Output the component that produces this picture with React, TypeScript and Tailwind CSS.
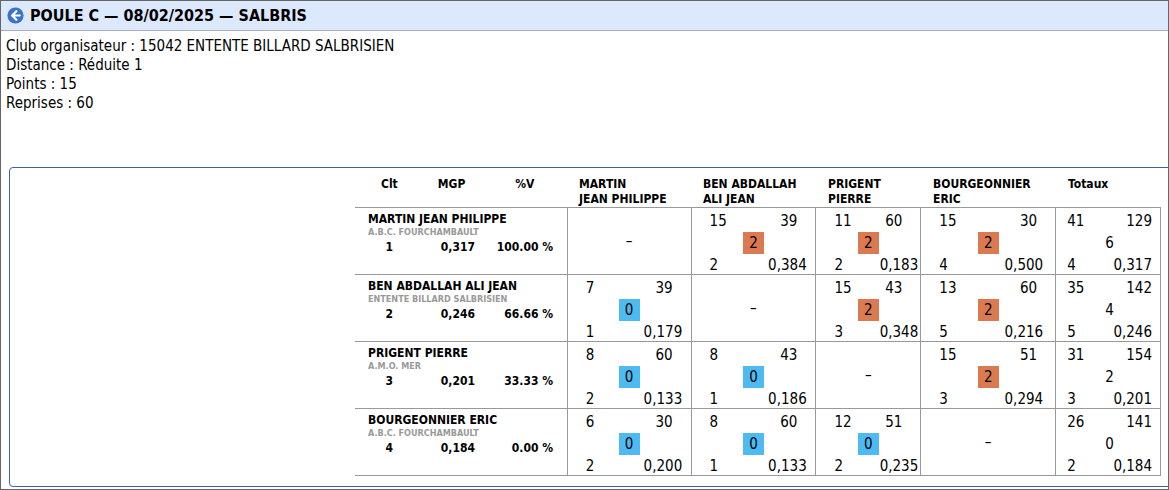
const F = { fontFamily: '"DejaVu Sans Condensed","DejaVu Sans",Tahoma,sans-serif' };

type C = null | [string, string, number, string, string];
const players = [
  { name: "MARTIN JEAN PHILIPPE", club: "A.B.C. FOURCHAMBAULT", clt: "1", mgp: "0,317", pv: "100.00 %",
    cells: [null, ["15","39",2,"2","0,384"], ["11","60",2,"2","0,183"], ["15","30",2,"4","0,500"]] as C[], tot: ["41","129","6","4","0,317"] },
  { name: "BEN ABDALLAH ALI JEAN", club: "ENTENTE BILLARD SALBRISIEN", clt: "2", mgp: "0,246", pv: "66.66 %",
    cells: [["7","39",0,"1","0,179"], null, ["15","43",2,"3","0,348"], ["13","60",2,"5","0,216"]] as C[], tot: ["35","142","4","5","0,246"] },
  { name: "PRIGENT PIERRE", club: "A.M.O. MER", clt: "3", mgp: "0,201", pv: "33.33 %",
    cells: [["8","60",0,"2","0,133"], ["8","43",0,"1","0,186"], null, ["15","51",2,"3","0,294"]] as C[], tot: ["31","154","2","3","0,201"] },
  { name: "BOURGEONNIER ERIC", club: "A.B.C. FOURCHAMBAULT", clt: "4", mgp: "0,184", pv: "0.00 %",
    cells: [["6","30",0,"2","0,200"], ["8","60",0,"1","0,133"], ["12","51",0,"2","0,235"], null] as C[], tot: ["26","141","0","2","0,184"] },
];
const widths = ["w-[124px]", "w-[125px]", "w-[105px]", "w-[135px]"];

function Cell({ c, w }: { c: C; w: string }) {
  return (
    <div className={`${w} border-l border-[#999] h-full px-[18px] text-[15px] text-black`}>
      {c === null ? (
        <div className="h-full flex items-center justify-center">–</div>
      ) : (
        <div className="grid grid-cols-3 pt-[2px] leading-[22px]">
          <div>{c[0]}</div><div /><div className="text-right">{c[1]}</div>
          <div /><div className="flex justify-center">
            <span className={`w-[21px] h-[22px] flex items-center justify-center ${c[2] === 2 ? "bg-[#db7950]" : "bg-[#4dbaf2]"}`}>{c[2]}</span>
          </div><div />
          <div>{c[3]}</div><div /><div className="text-right">{c[4]}</div>
        </div>
      )}
    </div>
  );
}

export default function App() {
  return (
    <div style={F} className="w-[1169px] h-[490px] border border-[#666] bg-white text-black relative overflow-hidden">
      <div className="h-[30px] bg-[#dce8fc] border-b border-[#aab] flex items-center pl-[6px] gap-[6px]">
        <svg width="17" height="17" viewBox="0 0 20 20">
          <circle cx="10" cy="10" r="9.5" fill="#3b73c8" />
          <path d="M11 5 L6 10 L11 15 M6.5 10 H15" stroke="white" strokeWidth="2.6" fill="none" strokeLinecap="round" strokeLinejoin="round" />
        </svg>
        <span className="font-bold text-[16px]">POULE C — 08/02/2025 — SALBRIS</span>
      </div>
      <div className="pl-[5px] pt-[6px] text-[15px] leading-[19px]">
        <div>Club organisateur : 15042 ENTENTE BILLARD SALBRISIEN</div>
        <div>Distance : Réduite 1</div>
        <div>Points : 15</div>
        <div>Reprises : 60</div>
      </div>
      <div className="absolute left-[8px] top-[166px] w-[1170px] h-[320px] border border-[#3c5fae] rounded-[4px] pl-[345px] pt-[3px]">
        <div className="flex h-[36px] text-[12px] font-bold leading-[15px] pt-[6px]">
          <div className="w-[212px] flex">
            <span className="ml-[26px]">Clt</span>
            <span className="ml-[40px]">MGP</span>
            <span className="ml-[50px]">%V</span>
          </div>
          <div className="w-[124px] pl-[12px]">MARTIN<br />JEAN PHILIPPE</div>
          <div className="w-[125px] pl-[12px]">BEN ABDALLAH<br />ALI JEAN</div>
          <div className="w-[105px] pl-[12px]">PRIGENT<br />PIERRE</div>
          <div className="w-[135px] pl-[12px]">BOURGEONNIER<br />ERIC</div>
          <div className="pl-[12px]">Totaux</div>
        </div>
        <div className="w-[806px] border-r border-[#999]">
          {players.map((p) => (
            <div key={p.name} className="flex h-[68px] border-t border-b border-[#999] -mb-px">
              <div className="w-[212px] pl-[13px] pt-[4px]">
                <div className="text-[12px] font-bold leading-[15px]">{p.name}</div>
                <div className="text-[9px] font-bold text-[#999] leading-[11px]">{p.club}</div>
                <div className="flex text-[12px] font-bold leading-[18px]">
                  <span className="w-[47px] text-right pr-[22px]">{p.clt}</span>
                  <span className="w-[62px] text-right pr-[2px]">{p.mgp}</span>
                  <span className="w-[76px] text-right">{p.pv}</span>
                </div>
              </div>
              {p.cells.map((c, i) => <Cell key={i} c={c} w={widths[i]} />)}
              <div className="w-[105px] border-l border-[#999] h-full pl-[11px] pr-[8px] text-[15px] pt-[2px] leading-[22px]">
                <div className="flex justify-between"><span>{p.tot[0]}</span><span>{p.tot[1]}</span></div>
                <div className="text-center">{p.tot[2]}</div>
                <div className="flex justify-between"><span>{p.tot[3]}</span><span>{p.tot[4]}</span></div>
              </div>
            </div>
          ))}
        </div>
      </div>
    </div>
  );
}
